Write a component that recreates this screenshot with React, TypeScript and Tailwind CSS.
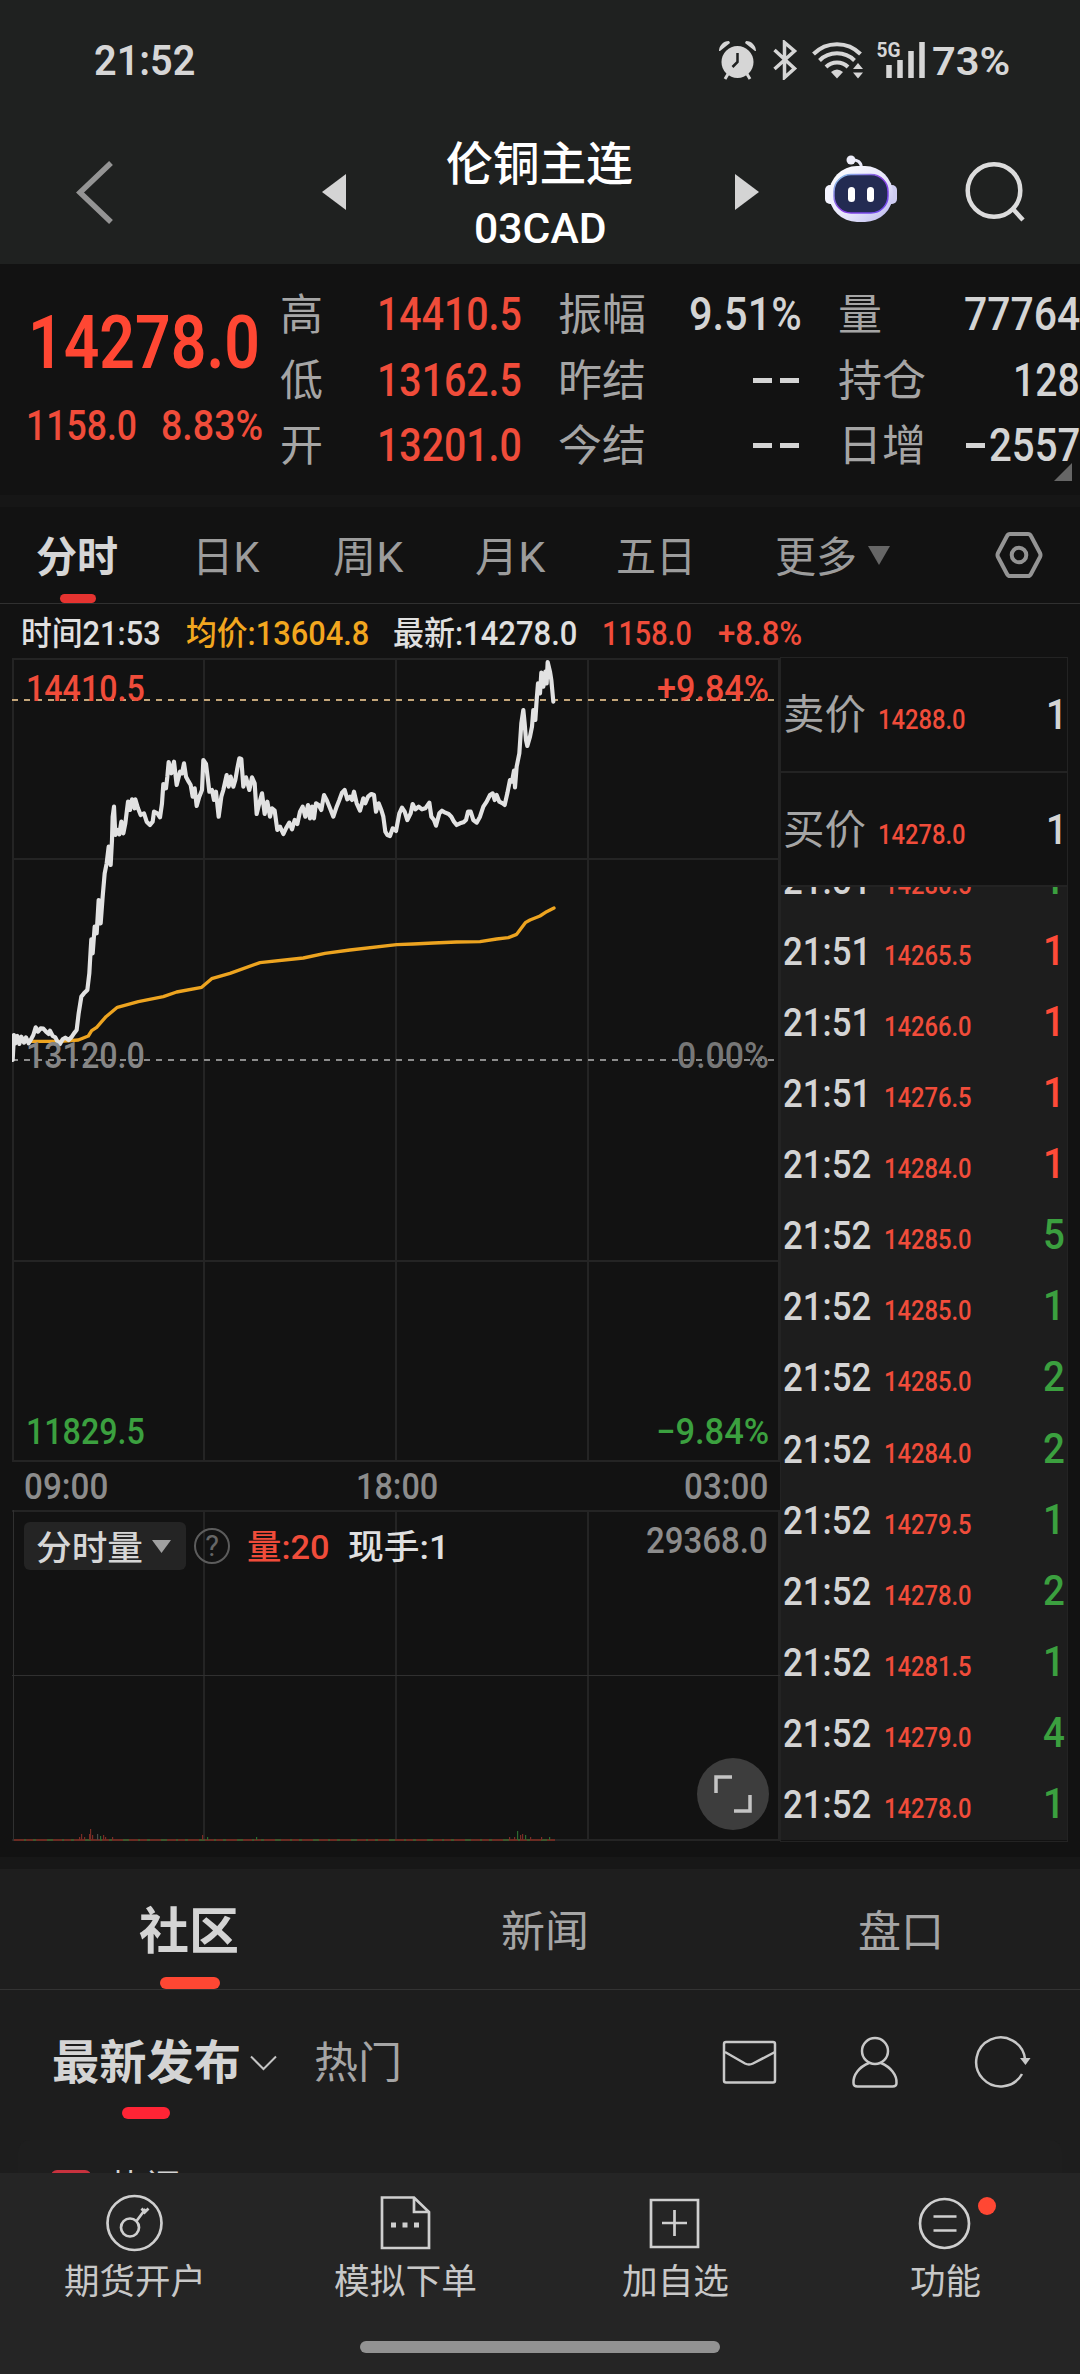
import { useLayoutEffect, useRef, useState, type ReactNode } from "react";

const STATS = [
  ["高", "14410.5", "振幅", "9.51%", "量", "77764"],
  ["低", "13162.5", "昨结", "--", "持仓", "128"],
  ["开", "13201.0", "今结", "--", "日增", "-2557"],
];
const STAT_W: Record<string, number> = { "9.51%": 113, "77764": 116, "128": 67 };

const PERIODS = [
  { label: "日K", w: 67, cls: "ml-[74px]" },
  { label: "周K", w: 70, cls: "ml-[74px]" },
  { label: "月K", w: 70, cls: "ml-[72px]" },
  { label: "五日", w: 80, cls: "ml-[71px]" },
  { label: "更多", w: 82, cls: "ml-[79px]" },
];

const TICKS = [
  ["21:51", "14280.5", "1", "g"],
  ["21:51", "14265.5", "1", "r"],
  ["21:51", "14266.0", "1", "r"],
  ["21:51", "14276.5", "1", "r"],
  ["21:52", "14284.0", "1", "r"],
  ["21:52", "14285.0", "5", "g"],
  ["21:52", "14285.0", "1", "g"],
  ["21:52", "14285.0", "2", "g"],
  ["21:52", "14284.0", "2", "g"],
  ["21:52", "14279.5", "1", "g"],
  ["21:52", "14278.0", "2", "g"],
  ["21:52", "14281.5", "1", "g"],
  ["21:52", "14279.0", "4", "g"],
  ["21:52", "14278.0", "1", "g"],
];

// chart series, three units to a pixel
const PRICE =
  "38,1260 42,1185 46,1210 52,1188 58,1212 64,1190 72,1208 78,1192 86,1210 94,1196 100,1185 107,1162 114,1175 122,1165 130,1166 138,1175 146,1182 150,1172 158,1188 166,1192 172,1204 180,1212 188,1198 196,1193 206,1200 214,1192 222,1180 230,1170 236,1120 244,1070 252,1060 262,1050 268,1000 272,930 274,898 278,940 284,860 290,880 296,780 302,850 308,770 314,700 320,670 326,620 332,675 336,600 338,530 342,500 346,585 352,570 358,583 364,545 370,580 376,550 384,485 390,510 396,478 404,505 406,478 414,505 422,525 432,520 440,545 450,555 458,545 462,515 472,520 480,532 486,490 490,432 498,445 502,410 506,366 514,400 522,365 530,435 540,395 546,400 552,370 558,410 566,425 572,435 578,470 584,445 590,498 598,470 606,450 610,360 618,372 624,420 628,455 636,450 642,480 648,455 656,530 664,470 670,450 680,405 686,440 692,410 700,440 706,420 712,385 718,355 724,357 730,440 738,412 748,450 756,412 764,430 770,522 778,490 786,460 794,522 802,485 810,530 816,505 824,512 832,570 840,560 850,582 858,565 868,548 876,568 884,540 892,552 900,515 908,500 916,530 924,495 930,535 936,500 942,535 948,490 956,495 964,510 972,465 980,480 990,505 1000,530 1010,500 1018,480 1026,458 1034,450 1042,478 1050,470 1056,480 1062,455 1070,490 1080,512 1090,475 1096,490 1104,470 1114,462 1122,465 1128,515 1136,490 1144,510 1150,530 1156,575 1162,585 1170,588 1178,565 1188,573 1198,520 1206,503 1214,515 1222,540 1232,520 1238,492 1246,508 1256,500 1266,508 1276,505 1288,488 1294,530 1302,540 1308,557 1318,520 1326,512 1336,518 1346,522 1354,530 1362,545 1370,555 1380,550 1390,547 1398,540 1404,515 1412,515 1420,540 1430,548 1440,530 1450,500 1460,485 1470,465 1478,460 1484,480 1490,465 1498,485 1508,490 1514,495 1522,460 1530,420 1536,425 1542,392 1545,442 1550,380 1558,340 1564,250 1570,210 1574,250 1578,300 1582,318 1590,290 1596,260 1600,210 1606,240 1610,180 1614,130 1620,160 1624,98 1630,140 1636,95 1640,130 1643,66 1650,95 1654,120 1660,185";
const AVERAGE =
  "90,1204 180,1204 235,1200 265,1188 275,1172 290,1162 318,1130 352,1102 415,1085 490,1070 530,1056 605,1042 635,1016 690,1000 780,968 910,954 975,940 1050,930 1190,914 1240,912 1300,909 1370,906 1440,905 1490,897 1525,893 1550,883 1576,848 1590,840 1620,828 1640,815 1662,804";

// volume spikes: [x, height, colour]
const VOLUME: [number, number, string][] = [
  [79, 3, "#7a2c25"], [81, 6, "#7a2c25"], [84, 3, "#7a2c25"], [89, 6, "#7a2c25"], [90, 11, "#7a2c25"], [92, 5, "#7a2c25"],
  [97, 6, "#4a4a4a"], [100, 4, "#2b6b30"], [103, 5, "#7a2c25"], [105, 3, "#7a2c25"], [112, 3, "#7a2c25"], [202, 5, "#7a2c25"],
  [207, 3, "#2b6b30"], [256, 3, "#2b6b30"], [509, 3, "#7a2c25"], [514, 3, "#7a2c25"], [517, 9, "#2b6b30"], [520, 5, "#7a2c25"],
  [522, 6, "#7a2c25"], [525, 5, "#2b6b30"], [530, 3, "#7a2c25"], [541, 3, "#7a2c25"], [549, 3, "#2b6b30"],
];

const CHART_LABELS = [
  { text: "14410.5", w: 119, cls: "left-[14px] top-[14px] text-[#f04c3a]" },
  { text: "+9.84%", w: 112, cls: "left-[645px] top-[14px] text-[#f04c3a]" },
  { text: "13120.0", w: 119, cls: "left-[14px] top-[381px] text-[#858585]" },
  { text: "0.00%", w: 92, cls: "left-[665px] top-[381px] text-[#777]" },
  { text: "11829.5", w: 119, cls: "left-[14px] top-[757px] text-[#3ba03f]" },
  { text: "−9.84%", w: 113, cls: "left-[644px] top-[757px] text-[#3ba03f]" },
];

// squeezes a run of text into exactly w pixels
function Fit({ w, className = "", children }: { w: number; className?: string; children: ReactNode }) {
  const ref = useRef<HTMLSpanElement>(null);
  const [scale, setScale] = useState(1);
  useLayoutEffect(() => {
    if (ref.current) setScale(w / ref.current.offsetWidth);
  }, [w, children]);
  return (
    <div className={`shrink-0 whitespace-nowrap ${className}`} style={{ width: w }}>
      <span ref={ref} className="inline-block origin-left" style={{ transform: `scaleX(${scale})` }}>{children}</span>
    </div>
  );
}

function StatusBar() {
  return (
    <div className="flex h-[120px] pt-[36px] text-[#d6d6d6]">
      <Fit w={101} className="ml-[94px] mt-[1px] text-[42px] leading-[48px] font-semibold">21:52</Fit>
      <svg className="ml-[522px] mt-[4px] shrink-0" width="212" height="40" viewBox="717 40 212 40" fill="none" stroke="#d6d6d6">
        <circle cx="737.500" cy="62" r="16" fill="#d6d6d6" stroke="none" />
        <path d="M719 51c0-5 4-10 10-10l1 2-10 8zM756 51c0-5-4-10-10-10l-1 2 10 8z" fill="#d6d6d6" stroke="none" />
        <path d="M728 74l-3 5M747 74l3 5" strokeWidth="3" />
        <path d="M737.500 53v9l-5 5" stroke="#1f2120" strokeWidth="2.500" />
        <path d="M774.500 50l20 18.500-10 9V42.500l10 8.500-20 18" strokeWidth="3.500" />
        <path d="M813.500 54a33 33 0 0 1 47 0M819.500 60.500a25 25 0 0 1 35 0M826 67a16 16 0 0 1 22 0" strokeWidth="4" />
        <path d="M831 72q6-5 12 0l-6 6.500z" fill="#d6d6d6" stroke="none" />
        <path d="M853 69h10l-5-6zM853 72.500h10l-5 6z" fill="#d6d6d6" stroke="none" />
        <path d="M889 65v13M900 60v18M911 51v27M922 42v36" strokeWidth="5.500" />
        <text x="876.500" y="57" fontSize="21" fontWeight="700" fill="#d6d6d6" stroke="none" textLength="24" lengthAdjust="spacingAndGlyphs">5G</text>
      </svg>
      <Fit w={78} className="ml-[3px] mt-[2px] text-[39px] leading-[48px] font-semibold">73%</Fit>
    </div>
  );
}

function Robot() {
  return (
    <svg className="ml-[65px] mt-[34px] shrink-0" width="74" height="70" viewBox="0 0 74 70">
      <defs>
        <linearGradient id="shell" x1="0" y1="0" x2="1" y2="1">
          <stop offset="0" stopColor="#ffffff" />
          <stop offset=".6" stopColor="#e4e4fa" />
          <stop offset="1" stopColor="#b9b5ee" />
        </linearGradient>
        <linearGradient id="rim" x1="0" y1="0" x2="1" y2="1">
          <stop offset="0" stopColor="#8ad4ea" />
          <stop offset=".5" stopColor="#8a3fe0" />
          <stop offset="1" stopColor="#6a4ff0" />
        </linearGradient>
      </defs>
      <path d="M27 6q10-1 10.500 8" fill="none" stroke="#e8e8f8" strokeWidth="3" />
      <circle cx="27" cy="6" r="4.500" fill="#eeeefa" />
      <rect x="1" y="31" width="12" height="19" rx="5" fill="#f4f4ff" />
      <rect x="61" y="31" width="12" height="19" rx="5" fill="#cfcdf2" />
      <rect x="5" y="12" width="64" height="56" rx="28" fill="url(#shell)" />
      <rect x="10" y="20.500" width="54" height="38.500" rx="17" fill="#232b52" stroke="url(#rim)" strokeWidth="1.500" />
      <rect x="24" y="33" width="7" height="15" rx="3.500" fill="#fff" />
      <rect x="43" y="33" width="7" height="15" rx="3.500" fill="#fff" />
    </svg>
  );
}

function TitleBar() {
  return (
    <div className="flex h-[144px]">
      <svg className="ml-[74px] mt-[40px] shrink-0" width="42" height="66" viewBox="0 0 42 66">
        <path d="M37 3L6 32.500L37 62" fill="none" stroke="#949494" strokeWidth="5.500" />
      </svg>
      <svg className="ml-[206px] mt-[54px] shrink-0" width="24" height="36"><path d="M24 0v36L0 18z" fill="#d4d4d4" /></svg>
      <div className="ml-[99px] w-[190px] shrink-0 text-white font-medium">
        <Fit w={187} className="ml-[1px] mt-[18px] text-[46px] leading-[52px]">伦铜主连</Fit>
        <Fit w={133} className="ml-[29px] mt-[12px] text-[43px] leading-[52px]">03CAD</Fit>
      </div>
      <svg className="ml-[100px] mt-[54px] shrink-0" width="24" height="36"><path d="M0 0v36L24 18z" fill="#d4d4d4" /></svg>
      <Robot />
      <svg className="ml-[67px] mt-[40px] shrink-0" width="64" height="64" viewBox="0 0 64 64" fill="none" stroke="#dcdcdc" strokeWidth="4.500">
        <circle cx="29" cy="30.500" r="26.300" />
        <path d="M48 49l10 11" />
      </svg>
    </div>
  );
}

function Quote() {
  return (
    <div className="relative flex h-[231px] overflow-hidden bg-[#121212]">
      <div className="ml-[24px] w-[256px] shrink-0 pt-[46px] text-[#ff4733]">
        <Fit w={232} className="ml-[4px] text-[73.500px] leading-[66px] font-semibold">14278.0</Fit>
        <div className="mt-[26px] flex text-[42px] leading-[48px] font-medium text-[#f04c3a]">
          <Fit w={111} className="ml-[2px]">1158.0</Fit>
          <Fit w={102} className="ml-[24px]">8.83%</Fit>
        </div>
      </div>
      <div className="pt-[18px] text-[45.500px] leading-[65.500px]">
        {STATS.map(([a, av, b, bv, c, cv]) => (
          <div key={a} className="flex font-medium">
            <Fit w={43} className="mt-[1px] -mb-[1px] text-[43px] font-normal text-[#a5a5a5]">{a}</Fit>
            <Fit w={145} className="ml-[54px] text-[#f04c3a]">{av}</Fit>
            <Fit w={88} className="mt-[1px] -mb-[1px] ml-[36px] text-[43px] font-normal text-[#a5a5a5]">{b}</Fit>
            <div className="flex w-[156px] shrink-0 justify-end text-[#d4d4d4]">
              {bv === "--" ? <DashPair /> : <Fit w={STAT_W[bv]}>{bv}</Fit>}
            </div>
            <Fit w={44 * c.length} className="mt-[1px] -mb-[1px] ml-[36px] text-[43px] font-normal text-[#a5a5a5]">{c}</Fit>
            <div className={c.length > 1 ? "flex w-[154px] shrink-0 items-center justify-end text-[#d4d4d4]" : "flex w-[198px] shrink-0 items-center justify-end text-[#d4d4d4]"}>
              {cv === "-2557" ? (
                <>
                  <span className="mr-[4px] h-[5px] w-[19px] bg-[#d4d4d4]" />
                  <Fit w={91}>2557</Fit>
                </>
              ) : (
                <Fit w={STAT_W[cv]}>{cv}</Fit>
              )}
            </div>
          </div>
        ))}
      </div>
      <svg className="absolute left-[1054px] top-[199px]" width="18" height="18"><path d="M18 0v18H0z" fill="#666" /></svg>
    </div>
  );
}

function DashPair() {
  return (
    <div className="mr-[3px] flex items-center gap-[8px]">
      <span className="h-[5px] w-[19px] bg-[#d4d4d4]" />
      <span className="h-[5px] w-[19px] bg-[#d4d4d4]" />
    </div>
  );
}

function PeriodTabs() {
  return (
    <div className="relative flex h-[97px] border-b border-[#303030] bg-[#121212] text-[42px] leading-[101px] text-[#9c9c9c]">
      <Fit w={82} className="ml-[36px] font-bold text-[#d6d6d6]">分时</Fit>
      {PERIODS.map((p) => (
        <Fit key={p.label} w={p.w} className={p.cls}>{p.label}</Fit>
      ))}
      <svg className="ml-[11px] mt-[39px] shrink-0" width="22" height="19"><path d="M0 0h22L11 19z" fill="#666" /></svg>
      <svg className="ml-[104px] mt-[24px] shrink-0" width="50" height="48" viewBox="0 0 50 48" fill="none" stroke="#949494" strokeWidth="4">
        <path d="M16 3h18q2 0 3 2l9 17q1 2 0 4l-9 17q-1 2-3 2H16q-2 0-3-2L4 26q-1-2 0-4l9-17q1-2 3-2z" />
        <circle cx="25" cy="24" r="7.300" />
      </svg>
      <div className="absolute left-[60px] top-[87px] h-[9px] w-[36px] rounded-full bg-[#e53330]" />
    </div>
  );
}

function InfoRow() {
  return (
    <div className="flex h-[53px] pl-[21px] text-[33px] leading-[60px] font-medium text-[#e0e0e0]">
      <Fit w={140}>时间21:53</Fit>
      <Fit w={183} className="ml-[25px] text-[#f2a71f]">均价:13604.8</Fit>
      <Fit w={184} className="ml-[24px]">最新:14278.0</Fit>
      <Fit w={90} className="ml-[25px] text-[#f04c3a]">1158.0</Fit>
      <Fit w={84} className="ml-[26px] text-[#f04c3a]">+8.8%</Fit>
    </div>
  );
}

function PriceChart() {
  return (
    <div className="relative h-[805px]">
      <svg className="block" width="768" height="805" viewBox="12 657 768 805" fill="none">
        <path d="M12 659h768M12 859h768M12 1261h768M12 1461h768M13 658v804M204 658v804M396 658v804M588 658v804M779 658v804" stroke="#242424" strokeWidth="2" />
        <path d="M12 700h763" stroke="#c4a679" strokeWidth="2" strokeDasharray="6 6" />
        <path d="M12 1060h763" stroke="#8c8c8c" strokeWidth="2" strokeDasharray="6 6" />
        <g transform="translate(0 640) scale(.33333)" strokeLinejoin="round" strokeLinecap="round">
          <polyline points={AVERAGE} stroke="#eda420" strokeWidth="10" />
          <polyline points={PRICE} stroke="#e2e2e2" strokeWidth="12.500" />
        </g>
      </svg>
      {CHART_LABELS.map((l) => (
        <div key={l.text} className={`absolute text-[36px] leading-[36px] font-medium ${l.cls}`}>
          <Fit w={l.w}>{l.text}</Fit>
        </div>
      ))}
    </div>
  );
}

function VolumeChart() {
  return (
    <div className="relative h-[331px]">
      <svg className="block" width="768" height="331" viewBox="12 1510 768 331" fill="none">
        <path d="M12 1511h768M12 1840h768M204 1510v331M396 1510v331M588 1510v331M779 1510v331" stroke="#242424" strokeWidth="2" />
        <path d="M12 1675.500h768M13.500 1510v331" stroke="#303030" />
        <path d="M14 1840h541" stroke="#6b2b22" strokeWidth="2" />
        <path d="M24 1840h531" stroke="#2b6b30" strokeWidth="2" strokeDasharray="2 7 3 11 6 9" opacity=".7" />
        {VOLUME.map(([x, h, c]) => (
          <rect key={x} x={x} y={1840 - h} width="1.200" height={h} fill={c} />
        ))}
      </svg>
      <div className="absolute left-[12px] top-[12px] flex h-[48px] items-center text-[34px] leading-[48px] font-medium text-[#e0e0e0]">
        <div className="flex h-[48px] w-[162px] items-center rounded-md bg-[#242424] pl-[12px]">
          <Fit w={107} className="mt-[3px] text-[#d6d6d6]">分时量</Fit>
          <svg className="ml-[9px]" width="19" height="13"><path d="M0 0h19L9.500 13z" fill="#a0a0a0" /></svg>
        </div>
        <div className="ml-[8px] flex size-[36px] items-center justify-center rounded-full border-2 border-[#5c5c5c] text-[29px] font-normal text-[#666]">?</div>
        <Fit w={83} className="ml-[17px] mt-[2px] text-[#f04c3a]">量:20</Fit>
        <Fit w={101} className="ml-[18px] mt-[2px]">现手:1</Fit>
      </div>
      <div className="absolute left-[634px] top-[13px] text-[36px] leading-[36px] font-medium text-[#8c8c8c]">
        <Fit w={122}>29368.0</Fit>
      </div>
      <div className="absolute left-[685px] top-[248px] flex size-[72px] items-center justify-center rounded-full bg-[#3d3d3d]">
        <svg width="38" height="38" viewBox="0 0 38 38" fill="none" stroke="#c4c4c4" strokeWidth="3.500"><path d="M2 18V2h16M36 20v16H20" /></svg>
      </div>
    </div>
  );
}

function OrderBook() {
  return (
    <div className="h-[1185px] w-[288px] overflow-hidden border border-[#232323] text-[#d4d4d4]">
      {[["卖价", "14288.0"], ["买价", "14278.0"]].map(([label, price]) => (
        <div key={label} className="flex h-[114.500px] items-baseline border-b-2 border-[#232323] pl-[2px] leading-[112px]">
          <Fit w={83} className="text-[41px] text-[#a5a5a5]">{label}</Fit>
          <Fit w={88} className="ml-[12px] text-[27px] font-medium text-[#f04c3a]">{price}</Fit>
          <Fit w={21} className="ml-auto text-[43px] font-medium">1</Fit>
        </div>
      ))}
      <div className="flex h-[953px] flex-col justify-end overflow-hidden bg-[#1d1d1d]">
        {TICKS.map(([time, price, qty, side], i) => (
          <div key={i} className="flex h-[71.080px] shrink-0 items-baseline pl-[2px] leading-[70px] font-medium">
            <Fit w={88} className="text-[39.500px]">{time}</Fit>
            <Fit w={88} className="ml-[13px] text-[27px] text-[#f04c3a]">{price}</Fit>
            <Fit w={22} className={side === "r" ? "ml-auto mr-[2px] text-[42px] text-[#ff4b38]" : "ml-auto mr-[2px] text-[42px] text-[#3ba03f]"}>{qty}</Fit>
          </div>
        ))}
      </div>
    </div>
  );
}

function Community() {
  return (
    <div className="h-[304px] overflow-hidden bg-[#1d1d1d]">
      <div className="relative flex h-[121px] border-b border-[#333] bg-[#1e1e1e] text-[43px] leading-[127px] text-[#a5a5a5]">
        <Fit w={100} className="ml-[139px] text-[50px] font-bold text-[#d4d4d4]">社区</Fit>
        <Fit w={88} className="ml-[262px]">新闻</Fit>
        <Fit w={86} className="ml-[269px]">盘口</Fit>
        <div className="absolute left-[160px] top-[108px] h-[12px] w-[60px] rounded-full bg-[#ff4733]" />
      </div>
      <div className="relative flex h-[150px] leading-[146px]">
        <Fit w={189} className="ml-[52px] text-[47px] font-bold text-[#d4d4d4]">最新发布</Fit>
        <svg className="ml-[9px] mt-[65px] shrink-0" width="28" height="16" fill="none" stroke="#c4c4c4" strokeWidth="2"><path d="M1 1.500L13.500 14L26 1.500" /></svg>
        <Fit w={88} className="ml-[36px] text-[43px] text-[#a5a5a5]">热门</Fit>
        <svg className="ml-[320px] mt-[46px] shrink-0" width="310" height="54" viewBox="722 2036 310 54" fill="none" stroke="#c8c8c8" strokeWidth="2.500">
          <rect x="724" y="2042" width="51" height="40.500" rx="2" />
          <path d="M725 2052l20 11.500q4 2 8 0l22-11.500" />
          <circle cx="875" cy="2051" r="13" />
          <path d="M869 2063c-10 4-16 12-15.500 20q0 3.500 4 3.500h35q4 0 4-3.500c.5-8-6-16-15.500-20" />
          <path d="M1022 2074a24.500 24.500 0 1 1 3-15" />
          <path d="M1020 2058h10.500l-5 7z" fill="#c8c8c8" stroke="none" />
        </svg>
        <div className="absolute left-[122px] top-[117px] h-[12px] w-[48px] rounded-full bg-[#ff2435]" />
      </div>
      <div className="mx-[18px] flex h-[60px] rounded-t-xl bg-[#1e1e1e] pt-[30px]">
        <div className="ml-[33px] size-[40px] rounded-md bg-[#c8323e]" />
        <div className="ml-[18px] mt-[1px] text-[36px] leading-[36px] text-[#d4d4d4]">热门</div>
      </div>
    </div>
  );
}

function BottomNav() {
  return (
    <div className="h-[201px] bg-[#252525] text-[35px] leading-[44px] text-[#c8c8c8]">
      <div className="grid h-[168px] grid-cols-4 pt-[20px]">
        <div className="flex flex-col items-center">
          <svg width="60" height="60" viewBox="0 0 60 60" fill="none" stroke="#cfcfcf" strokeWidth="2.700">
            <circle cx="29.500" cy="30" r="27" />
            <circle cx="25" cy="34.500" r="9" />
            <path d="M31.500 28l9-12M36.500 15.500l3.500 4M43.500 15.500l-5 5" />
          </svg>
          <Fit w={142} className="mt-[8px]">期货开户</Fit>
        </div>
        <div className="flex flex-col items-center">
          <svg width="60" height="60" viewBox="0 0 60 60" fill="none" stroke="#cfcfcf" strokeWidth="2.700">
            <path d="M7 4.500h32l15 14.500v36H7zM39 4.500V19h15" />
            <path d="M16 32h5M27.500 32h5M39 32h5" strokeWidth="5" />
          </svg>
          <Fit w={143} className="mt-[8px]">模拟下单</Fit>
        </div>
        <div className="flex flex-col items-center">
          <svg width="60" height="60" viewBox="0 0 60 60" fill="none" stroke="#cfcfcf" strokeWidth="2.700">
            <path d="M6 7h47v47H6zM29.500 17v26M17 30h25" />
          </svg>
          <Fit w={107} className="mt-[8px]">加自选</Fit>
        </div>
        <div className="relative flex flex-col items-center">
          <svg width="60" height="60" viewBox="0 0 60 60" fill="none" stroke="#cfcfcf" strokeWidth="2.700">
            <circle cx="29.500" cy="30.500" r="24.500" />
            <path d="M18.500 23.500h23M18.500 37.500h23" />
          </svg>
          <Fit w={71} className="mt-[8px]">功能</Fit>
          <span className="absolute left-[168px] top-[4px] size-[18px] rounded-full bg-[#ff4733]" />
        </div>
      </div>
      <div className="mx-auto h-[12px] w-[360px] rounded-full bg-[#929292]" />
    </div>
  );
}

export default function App() {
  return (
    <div className="h-[2374px] w-[1080px] overflow-hidden bg-[#121212] font-['Roboto','Noto_Sans_CJK_SC',sans-serif]">
      <div className="bg-[#1f2120]">
        <StatusBar />
        <TitleBar />
      </div>
      <Quote />
      <div className="h-[12px] bg-[#161616]" />
      <PeriodTabs />
      <InfoRow />
      <div className="flex h-[1200px] pl-[12px]">
        <div className="w-[768px] shrink-0">
          <PriceChart />
          <div className="flex h-[48px] text-[36px] leading-[51px] font-medium text-[#8c8c8c]">
            <Fit w={84} className="ml-[12px]">09:00</Fit>
            <Fit w={82} className="ml-[248px]">18:00</Fit>
            <Fit w={84} className="ml-[246px]">03:00</Fit>
          </div>
          <VolumeChart />
        </div>
        <OrderBook />
      </div>
      <div className="h-[12px] bg-[#171717]" />
      <Community />
      <BottomNav />
    </div>
  );
}
